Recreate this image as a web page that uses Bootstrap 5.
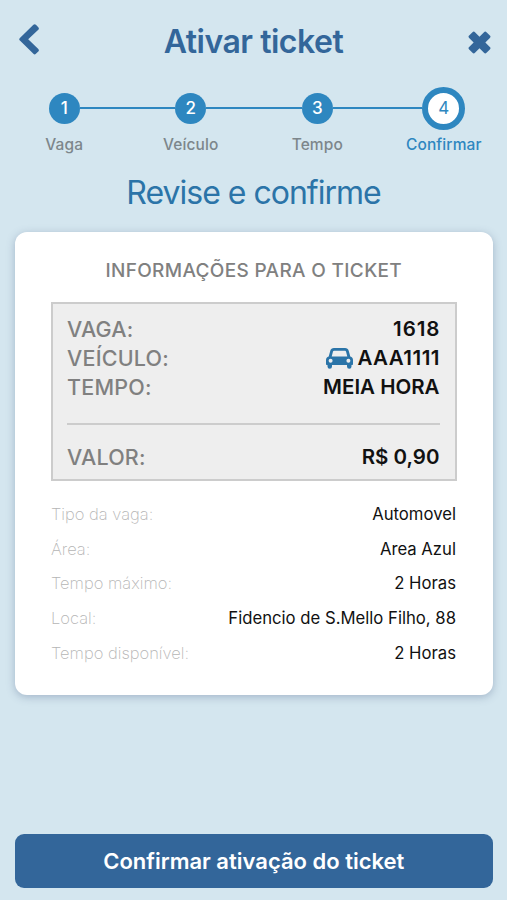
<!DOCTYPE html>
<html lang="pt-BR">
<head>
<meta charset="utf-8">
<meta name="viewport" content="width=device-width, initial-scale=1">
<title>Ativar ticket</title>
<link href="https://cdn.jsdelivr.net/npm/bootstrap@5.3.0/dist/css/bootstrap.min.css" rel="stylesheet">
<style>
  body { background: #d4e6ef; font-family: Inter, "Liberation Sans", sans-serif; color: #111; }
  .screen { height: 900px; overflow: hidden; }
  .topbar { height: 82px; padding: 0 16px 0 19px; }
  .topbar svg { fill: #33669a; }
  .topbar .icon-back { margin-bottom: 3px; }
  .topbar .icon-close { margin-top: 2px; }
  .topbar h1 { font-size: 32px; font-weight: 600; color: #33669a; line-height: 40px; letter-spacing: -.48px; padding-top: 1px; }
  .steps { height: 84px; padding-left: 1px; }
  .step-item { width: 126.6px; }
  .dot-row { height: 52px; }
  .rail { height: 2.5px; background: #2e87c0; }
  .dot { width: 31px; height: 31px; background: #2e87c0; color: #fff; font-size: 17px; font-weight: 500; line-height: 1; padding-top: 1px; }
  .dot-current { width: 43px; height: 43px; border: 6px solid #2e87c0; background: #fff; color: #2e87c0; font-weight: 400; }
  .step-label { font-size: 15.5px; font-weight: 500; line-height: 21px; letter-spacing: .1px; color: #7d868b; }
  .step-current .step-label { color: #2e87c0; }
  .subtitle { font-size: 32px; font-weight: 400; line-height: 40px; letter-spacing: -1px; color: #2b74a8; margin-top: 7px; }
  .ticket { margin: 19px 14.5px 0 15px; height: 463px; border-radius: 12px; padding: 0 36px; box-shadow: 0 2px 8px rgba(70,90,130,.35); }
  .ticket h3 { font-size: 19px; font-weight: 500; line-height: 24px; letter-spacing: .34px; color: #808080; margin-top: 27px; }
  .summary { height: 179px; margin-top: 19px; border: 2px solid #ccc; background: #eee; padding: 11px 15px 0 14px; }
  .summary-line { height: 29px; font-size: 21.5px; }
  .summary-line dt { font-weight: 500; color: #808080; letter-spacing: .22px; }
  .summary-line dd { font-weight: 600; font-size: 20.5px; color: #111; }
  .summary-line .spot { letter-spacing: .95px; margin-right: -.95px !important; }
  .summary-line .plate { letter-spacing: .5px; margin-right: -.5px !important; }
  .rule { height: 2px; background: #ccc; margin: 21px 0 18px; }
  .details { margin-top: 16px; padding-right: .5px; }
  .detail-line { height: 34.7px; font-size: 16.5px; }
  .detail-line dt { font-weight: 200; color: #b5b5b5; }
  .detail-line dd { font-weight: 400; font-size: 16.7px; }
  .confirm { margin: 0 14.5px 12.5px 15px; height: 53.5px; border-radius: 9px; background: #33669a; color: #fff; font-size: 22px; font-weight: 600; line-height: 1; }
</style>
</head>
<body>
<main class="screen d-flex flex-column">
  <header class="topbar d-flex align-items-center justify-content-between flex-shrink-0">
    <svg class="icon-back" width="20" height="31" viewBox="0 0 20 31"><path d="M14.4.8a1.8 1.8 0 0 1 2.5 0l2.4 2.4a1.8 1.8 0 0 1 0 2.5L9.2 15.3l10.1 9.600a1.800 1.800 0 0 1 0 2.500l-2.400 2.400a1.800 1.800 0 0 1-2.500 0L.9 16.500a1.700 1.700 0 0 1 0-2.500z"/></svg>
    <h1 class="m-0">Ativar ticket</h1>
    <svg class="icon-close" width="23" height="23" viewBox="0 0 24 24"><path d="M1.2 4.7 4.7 1.2a1.800 1.800 0 0 1 2.600 0L12 5.900l4.700-4.700a1.800 1.800 0 0 1 2.600 0l3.500 3.500a1.800 1.800 0 0 1 0 2.600L18.100 12l4.700 4.700a1.800 1.800 0 0 1 0 2.600l-3.500 3.500a1.800 1.800 0 0 1-2.600 0L12 18.100l-4.700 4.700a1.800 1.800 0 0 1-2.600 0l-3.500-3.500a1.800 1.800 0 0 1 0-2.600L5.900 12 1.200 7.300a1.800 1.800 0 0 1 0-2.600z"/></svg>
  </header>

  <nav class="steps d-flex flex-shrink-0">
    <div class="step-item text-center">
      <div class="dot-row d-flex align-items-center"><span class="flex-fill"></span><span class="dot rounded-circle d-flex align-items-center justify-content-center">1</span><span class="rail flex-fill"></span></div>
      <div class="step-label">Vaga</div>
    </div>
    <div class="step-item text-center">
      <div class="dot-row d-flex align-items-center"><span class="rail flex-fill"></span><span class="dot rounded-circle d-flex align-items-center justify-content-center">2</span><span class="rail flex-fill"></span></div>
      <div class="step-label">Veículo</div>
    </div>
    <div class="step-item text-center">
      <div class="dot-row d-flex align-items-center"><span class="rail flex-fill"></span><span class="dot rounded-circle d-flex align-items-center justify-content-center">3</span><span class="rail flex-fill"></span></div>
      <div class="step-label">Tempo</div>
    </div>
    <div class="step-item step-current text-center">
      <div class="dot-row d-flex align-items-center"><span class="rail flex-fill"></span><span class="dot dot-current rounded-circle d-flex align-items-center justify-content-center">4</span><span class="flex-fill"></span></div>
      <div class="step-label">Confirmar</div>
    </div>
  </nav>

  <h2 class="subtitle text-center mb-0">Revise e confirme</h2>

  <section class="ticket bg-white flex-shrink-0">
    <h3 class="text-center mb-0">INFORMAÇÕES PARA O TICKET</h3>
    <dl class="summary mb-0">
      <div class="summary-line d-flex justify-content-between align-items-center"><dt>VAGA:</dt><dd class="spot m-0">1618</dd></div>
      <div class="summary-line d-flex justify-content-between align-items-center"><dt>VEÍCULO:</dt>
        <dd class="plate m-0 d-flex align-items-center"><svg class="me-1" width="27" height="21" viewBox="0 0 27 21"><path fill="#2b74a8" fill-rule="evenodd" d="M8 0h11c2 0 3.200 1 3.700 2.800l1.600 5.700c1.700.4 2.700 1.700 2.700 3.500v4.200c0 .6-.3.8-.8.8h-.7v1.500a2.200 2.200 0 0 1-4.500 0V17H6v1.500a2.200 2.200 0 0 1-4.500 0V17H.8c-.5 0-.8-.2-.8-.8V12c0-1.800 1-3.100 2.700-3.500l1.600-5.700C4.800 1 6 0 8 0zM8.200 2.700c-.7 0-1 .2-1.200.8L5.700 8.400h15.600L20 3.500c-.2-.6-.5-.8-1.200-.8zM4.600 10.700a2 2 0 1 0 0 4 2 2 0 0 0 0-4zm17.800 0a2 2 0 1 0 0 4 2 2 0 0 0 0-4z"/></svg>AAA1111</dd></div>
      <div class="summary-line d-flex justify-content-between align-items-center"><dt>TEMPO:</dt><dd class="m-0">MEIA HORA</dd></div>
      <div class="rule"></div>
      <div class="summary-line d-flex justify-content-between align-items-center"><dt>VALOR:</dt><dd class="m-0">R$ 0,90</dd></div>
    </dl>
    <dl class="details mb-0">
      <div class="detail-line d-flex justify-content-between align-items-center"><dt>Tipo da vaga:</dt><dd class="m-0">Automovel</dd></div>
      <div class="detail-line d-flex justify-content-between align-items-center"><dt>Área:</dt><dd class="m-0">Area Azul</dd></div>
      <div class="detail-line d-flex justify-content-between align-items-center"><dt>Tempo máximo:</dt><dd class="m-0">2 Horas</dd></div>
      <div class="detail-line d-flex justify-content-between align-items-center"><dt>Local:</dt><dd class="m-0">Fidencio de S.Mello Filho, 88</dd></div>
      <div class="detail-line d-flex justify-content-between align-items-center"><dt>Tempo disponível:</dt><dd class="m-0">2 Horas</dd></div>
    </dl>
  </section>

  <button type="button" class="confirm btn mt-auto p-0 flex-shrink-0">Confirmar ativação do ticket</button>
</main>
<script src="https://cdn.jsdelivr.net/npm/bootstrap@5.3.0/dist/js/bootstrap.bundle.min.js"></script>
</body>
</html>
